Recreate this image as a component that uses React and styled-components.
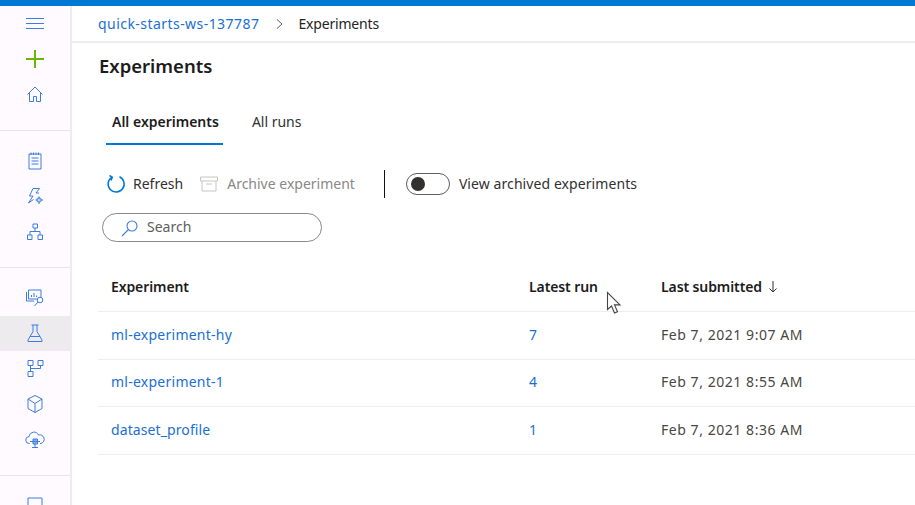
import React from "react";
import styled, { createGlobalStyle } from "styled-components";

const Global = createGlobalStyle`
  html, body { margin: 0; padding: 0; background: #fff; overflow: hidden; }
  body { font-family: "Noto Sans", "Open Sans", "Liberation Sans", sans-serif; }
  * { box-sizing: border-box; }
`;

const Page = styled.div`
  position: relative; width: 915px; height: 505px; overflow: hidden;
  display: flex; flex-direction: column; background: #fff;
`;
const TopBar = styled.div`height: 6px; background: #0078d4; flex: none;`;
const Body = styled.div`flex: 1; display: flex; min-height: 0;`;
const Sidebar = styled.nav`
  width: 72px; flex: none; background: #fefaff; border-right: 2px solid #eeecee;
  display: flex; flex-direction: column;
`;
const NavGroup = styled.div`
  flex: none; padding: ${p => p.$pad};
  border-bottom: ${p => p.$last ? "none" : "1px solid #e6e4e6"};
`;
const NavItem = styled.div`
  height: 35.5px; padding-bottom: 1px; display: flex; align-items: center; justify-content: center;
  background: ${p => p.$active ? "#edebed" : "transparent"};
`;
const Main = styled.main`flex: 1; min-width: 0; display: flex; flex-direction: column;`;
const Breadcrumb = styled.div`
  height: 37px; flex: none; border-bottom: 2px solid #ececec; padding: 0 0 0 26px;
  display: flex; align-items: center; font-size: 14px; color: #242424;
`;
const CrumbLink = styled.span`color: #1a6fd4; letter-spacing: 0.45px;`;
const CrumbSep = styled.span`display: flex; margin: 0 15px 0 17px;`;
const CrumbCurrent = styled.span`letter-spacing: -0.18px;`;
const Content = styled.div`padding: 0 0 0 27px; display: flex; flex-direction: column;`;
const Title = styled.h1`
  margin: 10px 0 0; font-size: 18.5px; line-height: 26px; font-weight: 600; color: #1c1c1c;
`;
const Tabs = styled.div`display: flex; gap: 23px; margin: 29px 0 0 7px;`;
const Tab = styled.div`
  height: 37px; padding: 0 4px 0 6px; font-size: 14px; line-height: 28px;
  font-weight: ${p => p.$active ? 600 : 400}; color: ${p => p.$active ? "#1c1c1c" : "#323130"};
  border-bottom: 2px solid ${p => p.$active ? "#0078d4" : "transparent"};
`;
const Toolbar = styled.div`
  display: flex; align-items: center; height: 30px; margin: 24px 0 0 7px; font-size: 14px; line-height: 19px; color: #323130;
`;
const ToolButton = styled.div`
  display: flex; align-items: center; gap: ${p => p.$gap}px; color: ${p => p.$muted ? "#8a8886" : "#323130"};
  margin-right: ${p => p.$mr}px;
`;
const ToolLabel = styled.span`padding-bottom: 1px;`;
const VDivider = styled.div`width: 1px; height: 28px; background: #111; margin-right: 21px;`;
const Track = styled.div`
  width: 44px; height: 22px; border: 1px solid #605e5c; border-radius: 11px; padding: 0 4px;
  display: flex; align-items: center; margin-right: 9px;
`;
const Knob = styled.div`width: 14px; height: 14px; border-radius: 50%; background: #323130;`;
const SwitchLabel = styled.span`letter-spacing: 0.08px; padding-bottom: 1px;`;
const SearchBox = styled.div`
  width: 220px; height: 29px; margin: 14px 0 0 3px; border: 1px solid #8a8886; border-radius: 15px;
  display: flex; align-items: center; gap: 8px; padding: 0 0 0 18px; font-size: 14px; color: #605e5c;
`;
const SearchLabel = styled.span`padding-bottom: 2px;`;
const Table = styled.div`margin: 25px 0 0 -1px; width: 818px;`;
const Row = styled.div`
  display: grid; grid-template-columns: 418px 132px 1fr; align-items: center;
  height: ${p => p.$head ? 45 : 47.5}px; padding: 0 0 ${p => p.$head ? 6 : 2}px 13px; font-size: 14px;
  border-bottom: 1px solid #eeeeee;
`;
const HeadCell = styled.div`font-weight: 600; color: #1c1c1c; display: flex; align-items: center; gap: 6px; letter-spacing: -0.1px;`;
const LinkCell = styled.div`color: #1a6fd4; letter-spacing: ${p => p.$tight ? 0.1 : 0.25}px;`;
const TextCell = styled.div`color: #484644; letter-spacing: 0.55px;`;
const Cursor = styled.svg`position: absolute; left: 606px; top: 291px;`;

const BLUE = "#3b7de0";
const B = { fill: "none", stroke: BLUE, strokeWidth: 1 };
const I = ({ children }) => (
  <svg width="20" height="20" viewBox="0 0 20 20" {...B}>{children}</svg>
);

const Icons = {
  menu: <I><path d="M1 5.500h18M1 10.500h18M1 15.500h18" strokeWidth="1.200" /></I>,
  plus: <svg width="20" height="20" viewBox="0 0 20 20"><path d="M10 1v18M1 10h18" stroke="#6bb700" strokeWidth="2" fill="none" /></svg>,
  home: <I><path d="M2.500 10.500 10 3l7.500 7.500M4.500 9v8.500h4v-5h3v5h4V9" /></I>,
  notebook: <I><path d="M4 3h12v15H4zM6 1.500V4M8.500 1.500V4M11 1.500V4M13.500 1.500V4M6.500 7h7M6.500 10h7M6.500 13h7" /></I>,
  bolt: <I><path d="M8 2.500h6.500L11 7h3M8 2.500 4.500 10H8l-4.500 7 5-3.500" /><circle cx="14" cy="14" r="2.200" fill={BLUE} fillOpacity="0.35" /><path d="M14 10.500v2M14 16v2M10.500 14h1.500M16 14h2" /></I>,
  tree: <I><path d="M8 2h4.500v4H8zM2.500 13H7v4.500H2.500zM13 13h4.500v4.500H13zM10 6v3.500M5 13V9.500h10V13" /></I>,
  data: <I><path d="M3.500 3H16v9H3.500zM1.500 5v9H9" /><path d="M6.500 10V8M9 10V6M11.500 10V8.500" /><circle cx="15" cy="13" r="2.800" fill="#fefaff" /><path d="M13 15l-3.500 4" /></I>,
  flask: <I><path d="M6.500 2h7M8 2v6.500L3 17v1.500h14V17l-5-8.500V2M5 13.500h10" /></I>,
  pipeline: <I><path d="M3 2.500h5v5H3zM13 2.500h5v5h-5zM3 13.500h5v5H3zM5.500 7.500v6M5.500 10.500h10v-3" /></I>,
  cube: <I><path d="M10 1.500 17 5v9.500l-7 4-7-4V5zM3 5l7 4.500L17 5M10 9.500v9" /></I>,
  cloud: <I><path d="M5 14.500h-.5a3.500 3.500 0 0 1-.5-7 5 5 0 0 1 9.500-1.500A4.200 4.200 0 0 1 16 14.500h-1" /><path d="M8 10h4.500v5H8z" fill={BLUE} fillOpacity="0.6" /><path d="M5 12.500h10M10 15v3.500M7 18.500h6" /></I>,
  square: <I><path d="M3 3h14v14H3z" /></I>,
};

const groups = [
  { keys: ["menu", "plus", "home"], extra: "0 0 17px" },
  { keys: ["notebook", "bolt", "tree"], extra: "13px 0 17px" },
  { keys: ["data", "flask", "pipeline", "cube", "cloud"], extra: "12px 0 17px" },
  { keys: ["square"], extra: "12px 0 0", last: true },
];

const rows = [
  ["ml-experiment-hy", "7", "Feb 7, 2021 9:07 AM", false],
  ["ml-experiment-1", "4", "Feb 7, 2021 8:55 AM", false],
  ["dataset_profile", "1", "Feb 7, 2021 8:36 AM", true],
];

export default function App() {
  return (
    <Page>
      <Global />
      <TopBar />
      <Body>
        <Sidebar>
          {groups.map((g, i) => (
            <NavGroup key={i} $pad={g.extra} $last={g.last}>
              {g.keys.map(k => (
                <NavItem key={k} $active={k === "flask"}>{Icons[k]}</NavItem>
              ))}
            </NavGroup>
          ))}
        </Sidebar>
        <Main>
          <Breadcrumb>
            <CrumbLink>quick-starts-ws-137787</CrumbLink>
            <CrumbSep>
              <svg width="7" height="10" viewBox="0 0 7 10" fill="none" stroke="#605e5c" strokeWidth="1"><path d="M1 .5 6 5 1 9.500" /></svg>
            </CrumbSep>
            <CrumbCurrent>Experiments</CrumbCurrent>
          </Breadcrumb>
          <Content>
            <Title>Experiments</Title>
            <Tabs>
              <Tab $active>All experiments</Tab>
              <Tab>All runs</Tab>
            </Tabs>
            <Toolbar>
              <ToolButton $gap={7} $mr={17}>
                <svg width="20" height="20" viewBox="0 0 20 20" fill="none" stroke="#0078d4" strokeWidth="1.5"><path d="M6 3.200a8 8 0 1 0 7.500-.4M3.500 1.500 6.300 3.200 5 6.500" /></svg>
                <ToolLabel>Refresh</ToolLabel>
              </ToolButton>
              <ToolButton $gap={9} $mr={29} $muted>
                <svg width="18" height="16" viewBox="0 0 18 16" fill="none" stroke="#c8c6c4" strokeWidth="1"><path d="M.5 1h17v4H.5zM2 5v10h14V5M6 8h6" /></svg>
                <ToolLabel>Archive experiment</ToolLabel>
              </ToolButton>
              <VDivider />
              <Track><Knob /></Track>
              <SwitchLabel>View archived experiments</SwitchLabel>
            </Toolbar>
            <SearchBox>
              <svg width="18" height="18" viewBox="0 0 18 18" fill="none" stroke={BLUE} strokeWidth="1.100"><circle cx="11" cy="7" r="5" /><path d="M7.500 10.500 1 17" /></svg>
              <SearchLabel>Search</SearchLabel>
            </SearchBox>
            <Table>
              <Row $head>
                <HeadCell>Experiment</HeadCell>
                <HeadCell>Latest run</HeadCell>
                <HeadCell>
                  Last submitted
                  <svg width="10" height="13" viewBox="0 0 10 13" fill="none" stroke="#323130" strokeWidth="1"><path d="M5 1v11M1.500 8.500 5 12l3.500-3.500" /></svg>
                </HeadCell>
              </Row>
              {rows.map(r => (
                <Row key={r[0]}>
                  <LinkCell $tight={r[3]}>{r[0]}</LinkCell>
                  <LinkCell>{r[1]}</LinkCell>
                  <TextCell>{r[2]}</TextCell>
                </Row>
              ))}
            </Table>
          </Content>
        </Main>
      </Body>
      <Cursor width="18" height="24" viewBox="0 0 18 24">
        <path d="M1.500 1.500v17l4-3.500 3 7 3-1.300-3-6.800h5.500z" fill="#fff" stroke="#444" strokeWidth="1.100" />
      </Cursor>
    </Page>
  );
}
